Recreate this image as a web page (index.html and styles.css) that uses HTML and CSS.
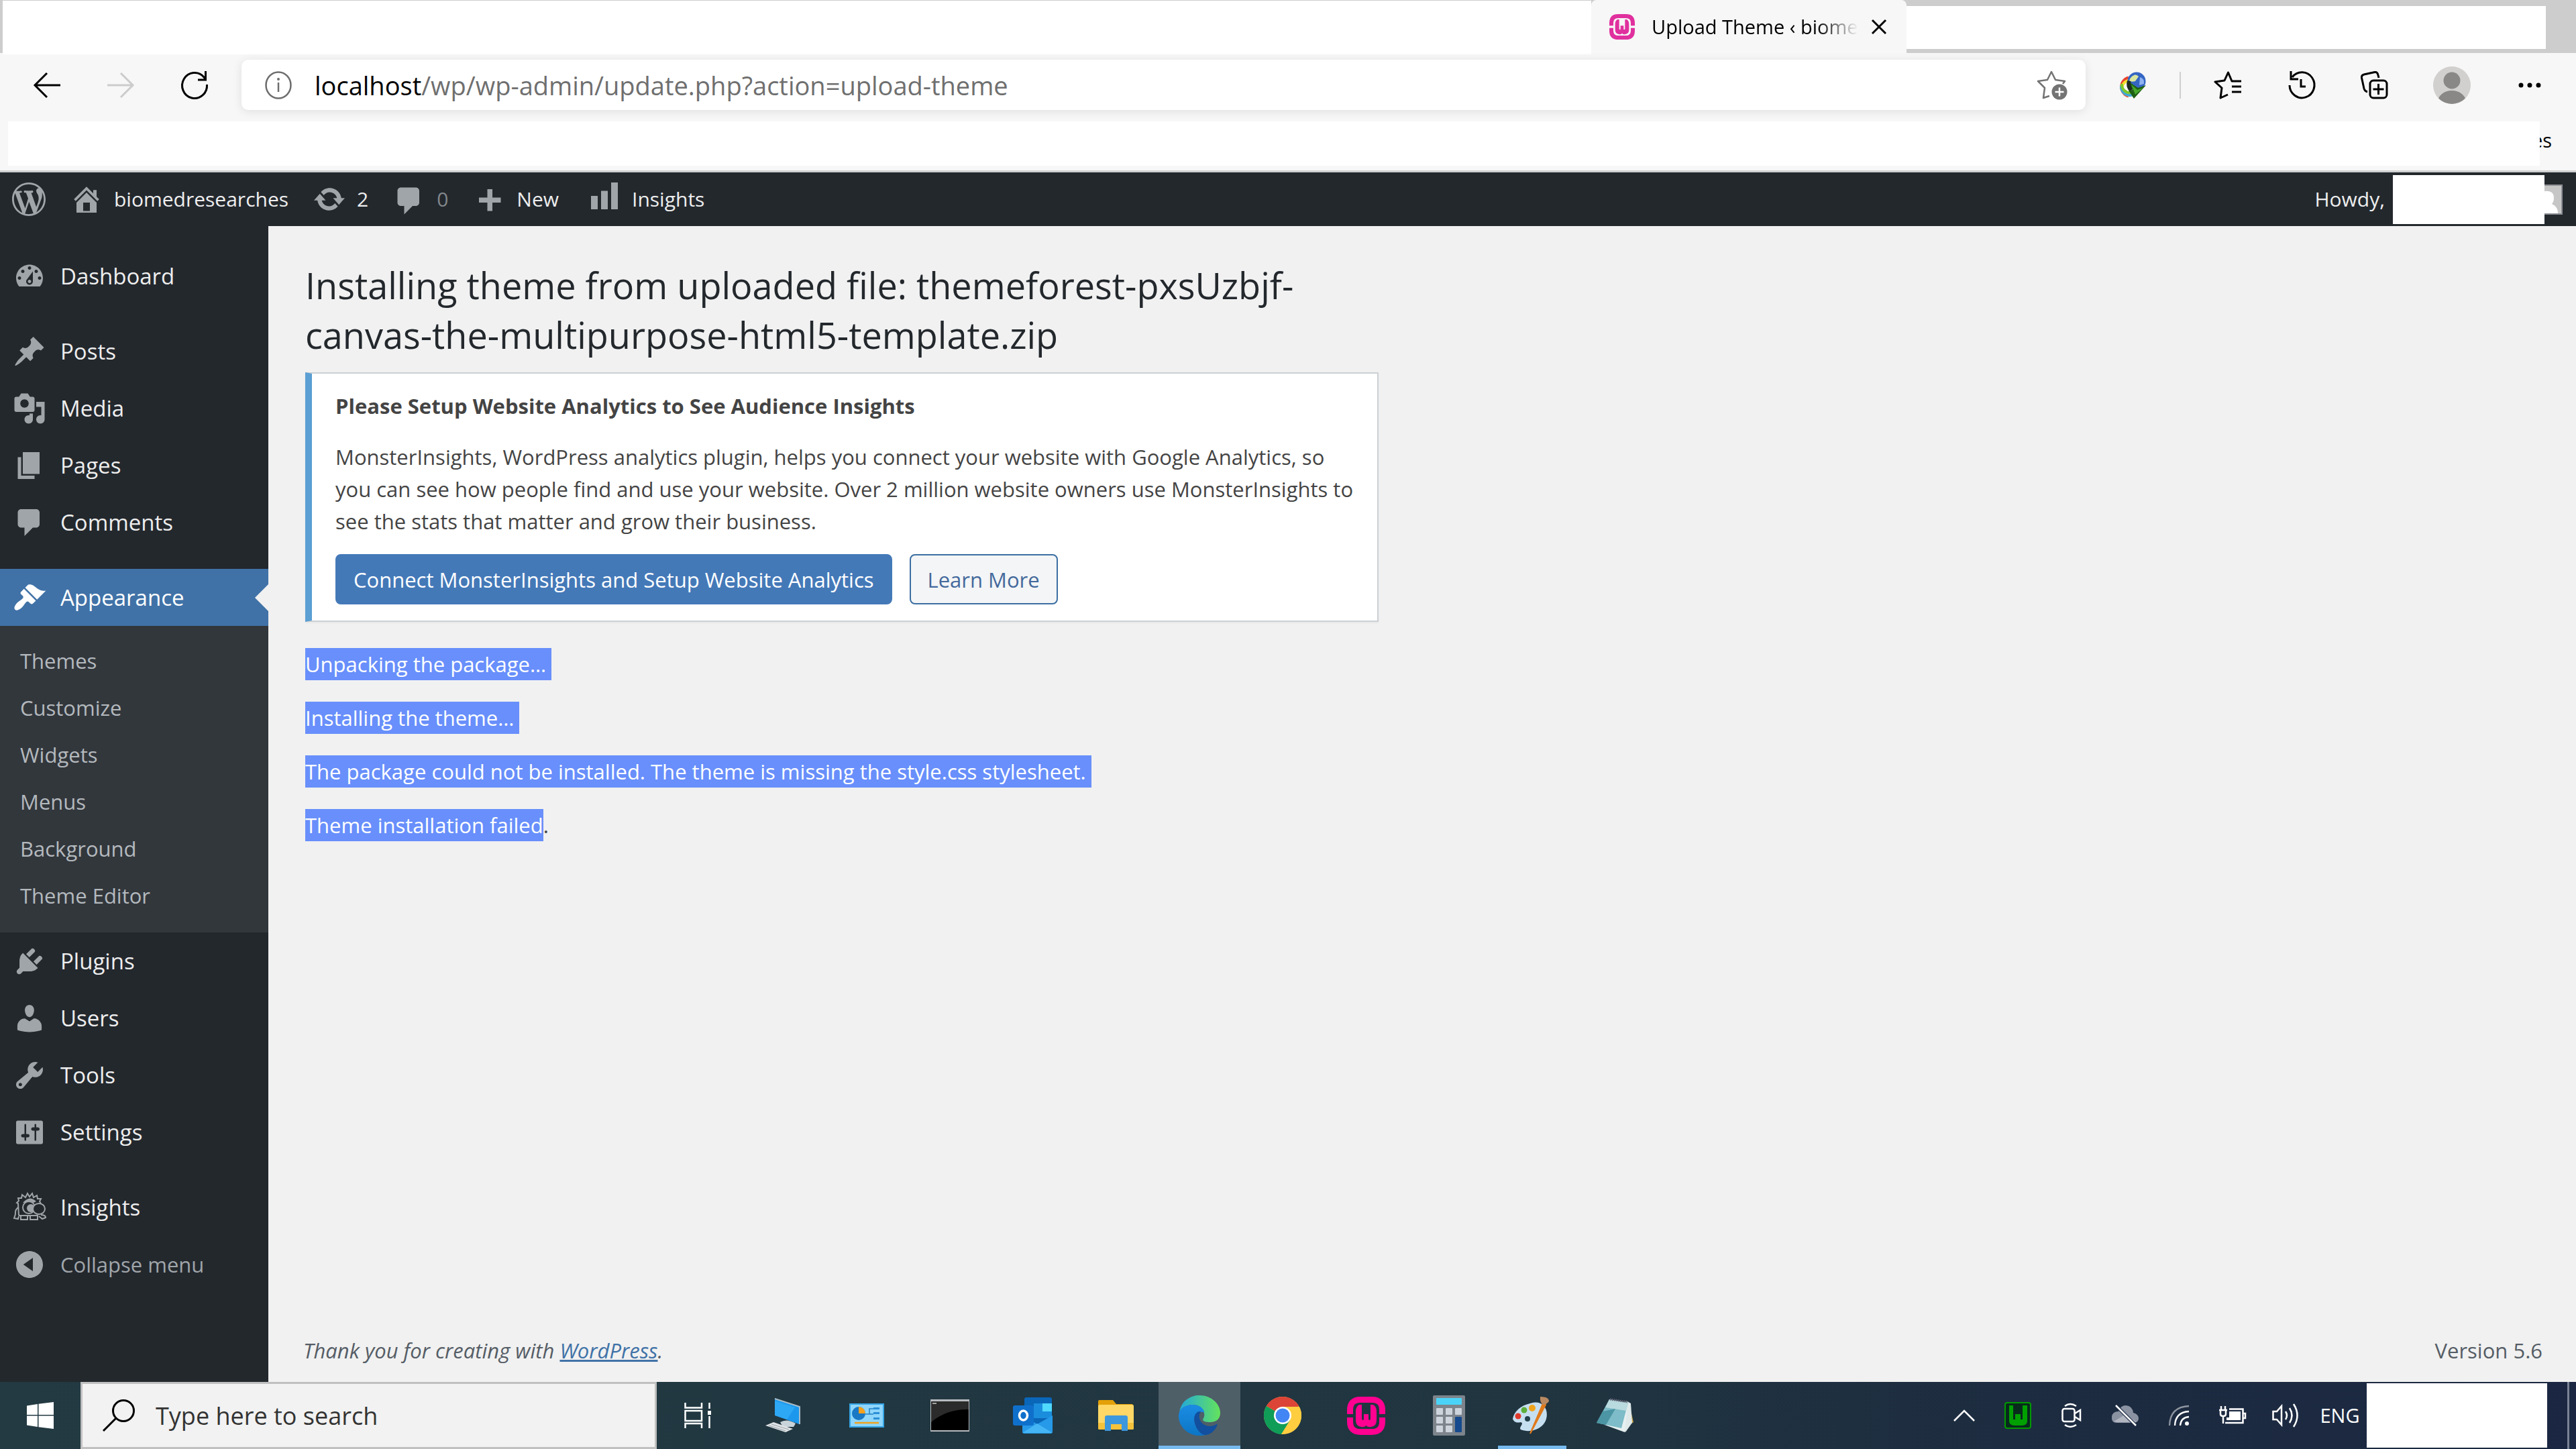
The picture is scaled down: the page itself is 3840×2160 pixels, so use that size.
FILE: index.html
```html
<!DOCTYPE html>
<html lang="en">
<head>
<meta charset="utf-8">
<title>Upload Theme ‹ biomedresearches</title>
<link rel="stylesheet" href="styles.css">
</head>
<body>
<svg width="0" height="0" class="defs" aria-hidden="true">
  <symbol id="wamp" viewBox="0 0 57 57">
    <path d="M4.500 26V20Q4.500 4.500 20 4.500H37Q52.500 4.500 52.500 20V26M4.500 31V37Q4.500 52.500 20 52.500H37Q52.500 52.500 52.500 37V31" fill="none" stroke="currentColor" stroke-width="9"/>
    <path d="M18 12H22V33Q22 35 24 35Q25 35 25 33V26H32V33Q32 35 33 35Q35 35 35 33V12H39Q44 15 44 22V35Q44 44 36 45Q31 46 28.500 43Q26 46 21 45Q13 44 13 35V22Q13 15 18 12Z" fill="currentColor"/>
  </symbol>
</svg>

<header class="browser">
  <div class="tabstrip">
    <div class="strip-blank strip-blank-left"></div>
    <div class="tab">
      <svg class="favicon" width="38" height="38"><use href="#wamp"/></svg>
      <span class="tab-title">Upload Theme ‹ biomed</span>
      <button class="icon-btn" aria-label="Close tab"><svg width="22" height="22" viewBox="0 0 22 22"><path d="M1 1L21 21M21 1L1 21" stroke="#000" stroke-width="3"/></svg></button>
    </div>
    <div class="strip-blank strip-blank-right"></div>
  </div>

  <div class="toolbar">
    <div class="nav-buttons">
      <button class="icon-btn" aria-label="Back"><svg width="40" height="40" viewBox="0 0 40 40"><path d="M20 2L2 20L20 38M2 20H40" fill="none" stroke="#000" stroke-width="3"/></svg></button>
      <button class="icon-btn" aria-label="Forward"><svg width="40" height="40" viewBox="0 0 40 40"><path d="M20 2L38 20L20 38M38 20H0" fill="none" stroke="#ccc" stroke-width="3"/></svg></button>
      <button class="icon-btn" aria-label="Refresh"><svg width="40" height="42" viewBox="0 0 40 42"><path d="M38.500 20A18.500 19 0 1 1 34 9L36 12M36.500 0V13H25" fill="none" stroke="#000" stroke-width="3"/></svg></button>
    </div>
    <div class="address">
      <svg width="40" height="42" viewBox="0 0 40 42"><ellipse cx="20" cy="21" rx="18.500" ry="19.500" fill="none" stroke="#6d6d6d" stroke-width="2.500"/><path d="M20 17V31" stroke="#6d6d6d" stroke-width="2.500"/><circle cx="20" cy="12" r="2" fill="#6d6d6d"/></svg>
      <div class="url" role="textbox" aria-label="Address"><span class="url-host">localhost</span>/wp/wp-admin/update.php?action=upload-theme</div>
      <button class="icon-btn" aria-label="Add to favorites"><svg width="46" height="44" viewBox="0 0 46 44"><path d="M18 38L9 41L11 26L1 16L15 14L21 2L27 14L41 16L38 20" fill="none" stroke="#737373" stroke-width="2.500" stroke-linejoin="round"/><circle cx="33" cy="32" r="11.500" fill="#737373"/><path d="M33 25.500V38.500M26.500 32H39.500" stroke="#fff" stroke-width="2.500"/></svg></button>
    </div>
    <div class="tools">
      <button class="icon-btn" aria-label="Download manager"><svg width="40" height="40" viewBox="0 0 40 40">
        <path d="M14 9A14 14 0 0 0 14 36" fill="none" stroke="#e8432e" stroke-width="5"/><path d="M15 13A11 11 0 0 0 16 35" fill="none" stroke="#f3e22e" stroke-width="4"/><path d="M3 21A13 13 0 0 0 21 34" fill="none" stroke="#43a6d8" stroke-width="4"/><path d="M4 18A12 12 0 0 0 18 31" fill="none" stroke="#7cc82c" stroke-width="4"/>
        <circle cx="26" cy="14" r="13.500" fill="#3566c4"/><path d="M17 9Q24 1 29 7L24 14Q18 16 15 13Z" fill="#d9e6a0"/><path d="M31 8Q38 10 37 18L30 20Z" fill="#8fb3f0"/>
        <path d="M12 13L17 14L20 26L16 30Q9 22 12 13Z" fill="#1e2b20"/><path d="M16 16L28 24L40 20L22 40L14 28L20 27Z" fill="#1f5f14"/><path d="M18 19L27 27L36 24L24 34Z" fill="#46a82a"/></svg></button>
      <span class="tool-divider"></span>
      <button class="icon-btn" aria-label="Favorites"><svg width="40" height="42" viewBox="0 0 40 42"><path d="M20 35L9 40L11 25L1 16L15 14L20.500 2L26 15H40M26 23H40M26 31H40" fill="none" stroke="#000" stroke-width="3" stroke-linejoin="round"/></svg></button>
      <span class="tool-pair">
      <button class="icon-btn" aria-label="History"><svg width="40" height="42" viewBox="0 0 40 42"><path d="M2 21A18.500 19 0 1 0 6 9M4 0V12H15M19 12V23H26" fill="none" stroke="#000" stroke-width="3"/></svg></button>
      <button class="icon-btn" aria-label="Collections"><svg width="40" height="42" viewBox="0 0 40 42"><rect x="14" y="14" width="25" height="26" rx="5" fill="none" stroke="#000" stroke-width="3"/><path d="M26.500 19V35M18.500 27H34.500M10 31Q6 30 5 26L1.500 10Q1 6 5 5L21 1.500Q25 1 26 6L27 10" fill="none" stroke="#000" stroke-width="3"/></svg></button>
      <button class="icon-btn" aria-label="Profile"><svg width="56" height="56" viewBox="0 0 56 56"><defs><clipPath id="pc"><circle cx="28" cy="28" r="28"/></clipPath></defs><g clip-path="url(#pc)"><rect width="56" height="56" fill="#d2d0ce"/><circle cx="28" cy="21" r="12.500" fill="#8a8886"/><ellipse cx="28" cy="53" rx="21" ry="17" fill="#8a8886"/></g></svg></button>
      <button class="icon-btn" aria-label="Settings and more"><svg width="40" height="10" viewBox="0 0 40 10"><circle cx="7" cy="5" r="3.500"/><circle cx="20" cy="5" r="3.500"/><circle cx="33" cy="5" r="3.500"/></svg></button>
      </span>
    </div>
  </div>

  <div class="favbar">
    <div class="favbar-blank"></div>
    <span class="favbar-more">es</span>
  </div>
</header>

<nav class="adminbar" aria-label="Toolbar">
  <a href="#" aria-label="About WordPress"><svg class="ico" viewBox="0 0 20 20"><path d="M20 10c0-5.510-4.490-10-10-10C4.480 0 0 4.490 0 10c0 5.520 4.480 10 10 10 5.510 0 10-4.480 10-10zM7.780 15.370L4.370 6.220c.55-.02 1.170-.08 1.170-.08.5-.06.44-1.130-.06-1.110 0 0-1.450.11-2.370.11-.18 0-.37 0-.58-.01C4.120 2.690 6.870 1.110 10 1.110c2.330 0 4.450.87 6.050 2.340-.68-.11-1.650.39-1.650 1.580 0 .74.45 1.360.9 2.100.35.61.55 1.360.55 2.460 0 1.490-1.400 5-1.400 5l-3.030-8.370c.54-.02.82-.17.82-.17.5-.05.44-1.250-.06-1.220 0 0-1.440.12-2.380.12-.87 0-2.330-.12-2.330-.12-.5-.03-.56 1.200-.06 1.220l.92.08 1.260 3.410zM17.410 10c.24-.64.74-1.870.43-4.250.7 1.290 1.050 2.710 1.050 4.250 0 3.290-1.730 6.240-4.400 7.780.97-2.590 1.940-5.200 2.920-7.780zM6.100 18.090C3.120 16.650 1.110 13.530 1.110 10c0-1.300.23-2.480.72-3.590C3.250 10.300 4.670 14.200 6.100 18.090zm4.030-6.630l2.580 6.980c-.86.29-1.760.45-2.710.45-.79 0-1.570-.11-2.290-.33.81-2.380 1.620-4.740 2.420-7.100z"/></svg></a>
  <a href="#"><svg class="ico" viewBox="0 0 20 20"><path d="M16 8.500l1.530 1.530-1.060 1.060L10 4.600l-6.470 6.490-1.060-1.060L10 2.500l4 4v-2h2v4zm-6-2.460l6 5.990V18H4v-5.970zM12 17v-5H8v5h4z"/></svg>biomedresearches</a>
  <a href="#"><svg class="ico" viewBox="0 0 20 20"><path d="M10.200 3.280c3.530 0 6.430 2.610 6.920 6h2.080l-3.500 4-3.500-4h2.320c-.45-1.970-2.210-3.450-4.320-3.450-1.450 0-2.730.71-3.540 1.780L4.950 5.660C6.230 4.200 8.110 3.280 10.200 3.280zm-.4 13.440c-3.520 0-6.430-2.610-6.920-6H.8l3.500-4c1.170 1.330 2.330 2.670 3.500 4H5.480c.45 1.970 2.210 3.450 4.320 3.450 1.450 0 2.730-.71 3.540-1.780l1.710 1.950c-1.280 1.460-3.150 2.380-5.250 2.380z"/></svg>2</a>
  <a href="#" class="muted"><svg class="ico" viewBox="0 0 20 20"><path d="M5 3h9c1.100 0 2 .9 2 2v7c0 1.100-.9 2-2 2h-2l-5 5v-5H5c-1.100 0-2-.9-2-2V5c0-1.100.9-2 2-2z"/></svg>0</a>
  <a href="#"><svg class="ico" viewBox="0 0 20 20"><path d="M17 9v3h-5v5H9v-5H4V9h5V4h3v5h5z"/></svg>New</a>
  <a href="#" class="stats"><svg class="ico" viewBox="0 0 20 20"><path d="M18 16V0h-4v16h4zm-6 0V5H8v11h4zm-6 0V8H2v8h4z"/></svg>Insights</a>
  <a href="#" class="howdy">Howdy,<span class="name-blank"></span><svg width="27" height="45" viewBox="0 0 27 45"><rect width="27" height="45" fill="#8c8f94"/><rect width="25" height="41" y="2" fill="#c6c6c6"/><path d="M0 10Q14 8 14 20Q14 26 11 29Q20 33 20 43H0Z" fill="#fff"/></svg></a>
</nav>

<div class="admin">
  <nav class="sidebar" aria-label="Main menu">
    <ul class="menu">
      <li><a href="#"><svg class="ico" viewBox="0 0 20 20"><path d="M3.760 16h12.480c1.100-1.370 1.760-3.110 1.760-5 0-4.420-3.580-8-8-8s-8 3.580-8 8c0 1.890.66 3.630 1.760 5zM10 4c.55 0 1 .45 1 1s-.45 1-1 1-1-.45-1-1 .45-1 1-1zM6 6c.55 0 1 .45 1 1s-.45 1-1 1-1-.45-1-1 .45-1 1-1zm8 0c.55 0 1 .45 1 1s-.45 1-1 1-1-.45-1-1 .45-1 1-1zm-5.370 5.550L12 7v6c0 1.100-.9 2-2 2s-2-.9-2-2c0-.57.24-1.080.63-1.450zM4 10c.55 0 1 .45 1 1s-.45 1-1 1-1-.45-1-1 .45-1 1-1zm12 0c.55 0 1 .45 1 1s-.45 1-1 1-1-.45-1-1 .45-1 1-1zm-5 3c0-.55-.45-1-1-1s-1 .45-1 1 .45 1 1 1 1-.45 1-1z"/></svg>Dashboard</a></li>
    </ul>
    <ul class="menu">
      <li><a href="#"><svg class="ico" viewBox="0 0 20 20"><path d="M10.440 3.020l1.820-1.820 6.360 6.350-1.830 1.820c-1.050-.68-2.480-.57-3.410.36l-.75.75c-.92.93-1.040 2.350-.35 3.410l-1.830 1.820-2.410-2.410-2.800 2.790c-.42.42-3.380 2.710-3.800 2.290s1.860-3.390 2.280-3.810l2.790-2.790L4.100 9.360l1.830-1.820c1.050.69 2.480.57 3.400-.36l.75-.75c.93-.92 1.050-2.350.36-3.410z"/></svg>Posts</a></li>
      <li><a href="#"><svg class="ico" viewBox="0 0 20 20"><path d="M13 11V4c0-.55-.45-1-1-1h-1.670L9 1H5L3.670 3H2c-.55 0-1 .45-1 1v7c0 .55.45 1 1 1h10c.55 0 1-.45 1-1zM7 4.500c1.380 0 2.500 1.120 2.500 2.500S8.380 9.500 7 9.500 4.500 8.380 4.500 7 5.620 4.500 7 4.500zM14 6h5v10.500c0 1.380-1.120 2.500-2.500 2.500S14 17.880 14 16.500s1.120-2.500 2.500-2.500c.17 0 .34.02.5.05V9h-3V6zm-4 8.050V13h2v3.500c0 1.380-1.120 2.500-2.500 2.500S7 17.880 7 16.500 8.120 14 9.500 14c.17 0 .34.02.5.05z"/></svg>Media</a></li>
      <li><a href="#"><svg class="ico" viewBox="0 0 20 20"><path d="M6 15V2h10v13H6zm-1 1h8v2H3V5h2v11z"/></svg>Pages</a></li>
      <li><a href="#"><svg class="ico" viewBox="0 0 20 20"><path d="M5 2h9c1.100 0 2 .9 2 2v7c0 1.100-.9 2-2 2h-2l-5 5v-5H5c-1.100 0-2-.9-2-2V4c0-1.100.9-2 2-2z"/></svg>Comments</a></li>
    </ul>
    <ul class="menu">
      <li class="current">
        <a href="#"><svg class="ico" viewBox="0 0 20 20"><path d="M14.480 11.060L7.410 3.990l1.500-1.500c.5-.56 2.300-.47 3.510.32 1.210.8 1.430 1.280 2.910 2.100 1.180.64 2.450 1.260 4.450.85zm-.71.71L6.700 4.700 4.930 6.470c-.39.39-.39 1.020 0 1.410l1.060 1.060c.39.39.39 1.030 0 1.420-.6.6-1.430 1.110-2.210 1.690-.35.26-.7.53-1.010.84C1.430 14.230.4 16.080 1.400 17.070c.99 1 2.840-.03 4.180-1.360.31-.31.58-.66.85-1.020.57-.78 1.080-1.610 1.690-2.210.39-.39 1.020-.39 1.410 0l1.060 1.060c.39.39 1.020.39 1.410 0z"/></svg>Appearance</a>
        <ul class="submenu">
          <li><a href="#">Themes</a></li>
          <li><a href="#">Customize</a></li>
          <li><a href="#">Widgets</a></li>
          <li><a href="#">Menus</a></li>
          <li><a href="#">Background</a></li>
          <li><a href="#">Theme Editor</a></li>
        </ul>
      </li>
      <li><a href="#"><svg class="ico" viewBox="0 0 20 20"><path d="M13.110 4.360L9.870 7.600 8 5.730l3.240-3.240c.35-.34 1.050-.2 1.560.32.52.51.66 1.210.31 1.550zm-8 1.770l.91-1.120 9.010 9.010-1.190.84c-.71.71-2.630 1.160-3.820 1.160H6.140L4.900 17.260c-.59.59-1.540.59-2.120 0-.59-.58-.59-1.530 0-2.120l1.240-1.240v-3.880c0-1.130.4-3.190 1.090-3.890zm7.260 3.970l3.240-3.240c.34-.35 1.040-.21 1.550.31.52.51.66 1.210.31 1.550l-3.240 3.250z"/></svg>Plugins</a></li>
      <li><a href="#"><svg class="ico" viewBox="0 0 20 20"><path d="M10 9.250c-2.270 0-2.730-3.440-2.730-3.440C7 4.020 7.820 2 9.970 2c2.160 0 2.980 2.020 2.710 3.810 0 0-.41 3.440-2.680 3.440zm0 2.570L12.720 10c2.390 0 4.520 2.330 4.520 4.530v2.490s-3.650 1.130-7.240 1.130c-3.650 0-7.240-1.130-7.240-1.130v-2.490c0-2.250 1.940-4.480 4.470-4.480z"/></svg>Users</a></li>
      <li><a href="#"><svg class="ico" viewBox="0 0 20 20"><path d="M16.680 9.770c-1.340 1.340-3.300 1.670-4.950.99l-5.410 6.520c-.99.99-2.590.99-3.580 0s-.99-2.590 0-3.570l6.520-5.420c-.68-1.650-.35-3.610.99-4.950 1.280-1.280 3.120-1.620 4.720-1.060l-2.890 2.890 2.820 2.820 2.860-2.870c.53 1.580.18 3.390-1.080 4.650zM3.810 16.210c.4.39 1.040.39 1.430 0 .4-.4.4-1.040 0-1.430-.39-.4-1.030-.4-1.430 0-.39.39-.39 1.030 0 1.430z"/></svg>Tools</a></li>
      <li><a href="#"><svg class="ico" viewBox="0 0 20 20"><path d="M18 16V4c0-.55-.45-1-1-1H3c-.55 0-1 .45-1 1v12c0 .55.45 1 1 1h14c.55 0 1-.45 1-1zM8 11h1c.55 0 1 .45 1 1s-.45 1-1 1H8v1.500c0 .28-.22.5-.5.5s-.5-.22-.5-.5V13H6c-.55 0-1-.45-1-1s.45-1 1-1h1V5.500c0-.28.22-.5.5-.5s.5.22.5.5V11zm5-2h-1c-.55 0-1-.45-1-1s.45-1 1-1h1V5.500c0-.28.22-.5.5-.5s.5.22.5.5V7h1c.55 0 1 .45 1 1s-.45 1-1 1h-1v5.500c0 .28-.22.5-.5.5s-.5-.22-.5-.5V9z"/></svg>Settings</a></li>
    </ul>
    <ul class="menu">
      <li><a href="#"><svg class="ico line" viewBox="0 0 50 50"><path d="M9 37L8 19L6 18L9 15L8 11L13 11L14 6L19 10L22 4L25 9L29 4L31 10L36 7L37 12L42 12L40 16L42 19M9 37H38M12 38V43H22V38M26 38V43H37V38M9 24Q3 28 4 35L2 41L8 42L9 38M42 36Q49 36 49 40L44 42L39 38"/><path d="M15 18Q25 6 35 16L31 18Q25 13 19 18Z" class="solid"/><circle cx="24" cy="25" r="9"/><circle cx="27" cy="26" r="6" class="solid"/><ellipse cx="39" cy="27" rx="9" ry="8" class="lens"/></svg>Insights</a></li>
      <li><button class="collapse"><svg class="ico" viewBox="0 0 20 20"><path d="M10 2c4.420 0 8 3.580 8 8s-3.580 8-8 8-8-3.580-8-8 3.580-8 8-8zm2 12V6l-5.700 4z"/></svg>Collapse menu</button></li>
    </ul>
  </nav>

  <main class="content">
    <div class="wrap">
      <h1>Installing theme from uploaded file: themeforest-pxsUzbjf-canvas-the-multipurpose-html5-template.zip</h1>
      <section class="notice">
        <h2>Please Setup Website Analytics to See Audience Insights</h2>
        <p>MonsterInsights, WordPress analytics plugin, helps you connect your website with Google Analytics, so you can see how people find and use your website. Over 2 million website owners use MonsterInsights to see the stats that matter and grow their business.</p>
        <div class="actions">
          <button class="btn btn-primary">Connect MonsterInsights and Setup Website Analytics</button>
          <button class="btn btn-secondary">Learn More</button>
        </div>
      </section>
      <div class="log">
        <p><mark class="to-end">Unpacking the package…</mark></p>
        <p><mark class="to-end">Installing the theme…</mark></p>
        <p><mark class="to-end">The package could not be installed. The theme is missing the style.css stylesheet.</mark></p>
        <p><mark>Theme installation failed</mark>.</p>
      </div>
    </div>
    <footer class="footer">
      <span class="thanks">Thank you for creating with <a href="#">WordPress</a>.</span>
      <span>Version 5.6</span>
    </footer>
  </main>
</div>

<div class="taskbar">
  <button class="start" aria-label="Start"><svg width="40" height="40" viewBox="0 0 40 40"><path d="M0 5.500L16 3V19H0ZM17.500 2.700L40 0V19H17.500ZM0 20.500H16V37L0 34.500ZM17.500 20.500H40V40L17.500 37.200Z" fill="#fff"/></svg></button>
  <label class="search">
    <svg width="50" height="50" viewBox="0 0 50 50"><circle cx="32" cy="18" r="15.500" fill="none" stroke="#000" stroke-width="3"/><path d="M21 29L2 48" stroke="#000" stroke-width="3"/></svg>
    <input type="text" placeholder="Type here to search" aria-label="Search">
  </label>
  <button class="app app-view" aria-label="Task View"><svg width="40" height="38" viewBox="0 0 40 38"><path d="M1.500 0V7.500H26V0M1.500 38V31H26V38M1.500 12H26V27H1.500ZM37.500 0V9M37.500 20V38" fill="none" stroke="#fff" stroke-width="2.500"/><rect x="35" y="12" width="5" height="6" fill="#fff"/></svg></button>
  <div class="apps">
    <button class="app" aria-label="This PC"><svg width="54" height="52" viewBox="0 0 54 52"><path d="M14 1L51 13V39L14 26Z" fill="#2da8f5"/><path d="M14 1L51 13V39L32 32L44 14L14 4Z" fill="#1b98ee"/><path d="M14 1L51 13V39" fill="none" stroke="#a8bcc8" stroke-width="2"/><path d="M22 36Q32 30 45 38L42 43H26Z" fill="#c9d3da"/><path d="M0 41L12 36L41 46L30 51Z" fill="#dfe3e6"/><path d="M5 41L30 49M9 39L35 47" stroke="#98a1a8" stroke-width="1"/></svg></button>
    <button class="app" aria-label="Control Panel"><svg width="52" height="36" viewBox="0 0 52 36"><rect width="52" height="36" fill="#35a5e6"/><rect x="2" y="2" width="48" height="32" fill="#8fd6fa"/><circle cx="14" cy="15" r="10" fill="#1a78c4"/><path d="M14 15V5A10 10 0 0 1 24 15Z" fill="#f5a11c"/><path d="M24 16H30V8H36M30 16H36" fill="none" stroke="#2481c4" stroke-width="1.500"/><path d="M36 6H45V9H36ZM36 13H45V16H36ZM36 21H45V24H36Z" fill="#2b8fd6"/><path d="M8 29H44" stroke="#f0a21e" stroke-width="2.500"/></svg></button>
    <button class="app" aria-label="Command Prompt"><svg width="58" height="48" viewBox="0 0 58 48"><rect width="58" height="48" fill="#b7bbc0"/><rect x="1" y="3" width="56" height="43" fill="#000"/><path d="M1 3H57V15Q25 14 1 34Z" fill="#2b2b2b"/><path d="M3 6H9" stroke="#ccc" stroke-width="1.500"/></svg></button>
    <button class="app" aria-label="Outlook"><svg width="60" height="54" viewBox="0 0 60 54"><rect x="17" width="41" height="40" rx="3" fill="#0a66b8"/><path d="M31 9H58V31H31Z" fill="#1b8ddd"/><path d="M44 9H58V21H44Z" fill="#50d9ff"/><path d="M14 26L36 40L59 27V51Q59 54 56 54H17Q14 54 14 51Z" fill="#2699e8"/><path d="M14 53L36 39L59 53Z" fill="#45b5f5"/><rect y="12" width="31" height="30" rx="3" fill="#0f70cc"/><ellipse cx="15.500" cy="27" rx="6" ry="7" fill="none" stroke="#fff" stroke-width="3.500"/></svg></button>
    <button class="app" aria-label="File Explorer"><svg width="54" height="46" viewBox="0 0 54 46"><path d="M0 2Q0 0 2 0H22L27 6H50Q52 6 52 8V12H0Z" fill="#e3a008"/><rect y="7" width="53" height="37" rx="2" fill="#ffd766"/><path d="M0 34H53V42Q53 44 51 44H2Q0 44 0 42Z" fill="#f5c23c"/><path d="M10 46V26Q10 23 13 23H41Q44 23 44 26V46H35V36H19V46Z" fill="#3d97dc"/></svg></button>
    <button class="app active" aria-label="Microsoft Edge"><svg width="62" height="60" viewBox="0 0 62 60"><defs><linearGradient id="e1" x2="1"><stop stop-color="#22a9dc"/><stop offset="1" stop-color="#64e35b"/></linearGradient><linearGradient id="e2" y1="1" x2="0"><stop stop-color="#0c75c4"/><stop offset="1" stop-color="#1b8de4"/></linearGradient></defs><path d="M1 25C4 8 17 0 31 0C49 0 62 13 62 26C62 35 56 40 47 40C39 40 34 38 37 34C41 27 36 14 21 14C10 14 3 20 1 25Z" fill="url(#e1)"/><path d="M0 31C0 20 10 14 21 14C31 14 38 20 38 26C29 21 22 31 24 41C26 51 34 58 42 58C38 60 35 60 31 60C13 60 0 46 0 31Z" fill="url(#e2)"/><path d="M24 41C21 31 26 23 33 24C27 33 33 45 46 46C51 46 54 44 57 43C58 43 58 44 57 46C53 54 47 58 41 59C33 60 26 50 24 41Z" fill="#124f9e"/></svg></button>
    <button class="app" aria-label="Google Chrome"><svg width="56" height="56" viewBox="0 0 56 56"><circle cx="28" cy="28" r="28" fill="#ffcd40"/><path d="M28 28L3.700 14A28 28 0 0 1 52.300 14Z" fill="#db4437"/><path d="M28 28L3.700 14A28 28 0 0 0 26 56L40 35Z" fill="#0f9d58"/><path d="M28 15H52.800A28 28 0 0 1 26 56L39 35Z" fill="#ffcd40"/><circle cx="28" cy="28" r="13" fill="#fff"/><circle cx="28" cy="28" r="10.500" fill="#4285f4"/></svg></button>
    <button class="app pink" aria-label="WampServer"><svg width="57" height="57"><use href="#wamp"/></svg></button>
    <button class="app" aria-label="Calculator"><svg width="48" height="60" viewBox="0 0 48 60"><rect width="48" height="60" rx="2" fill="#7d848b"/><rect x="5" y="4" width="38" height="10" rx="1" fill="#4bd3f7"/><g fill="#cdd4dc"><rect x="5" y="19" width="10" height="10" rx="1"/><rect x="19" y="19" width="10" height="10" rx="1"/><rect x="33" y="19" width="10" height="10" rx="1"/><rect x="5" y="32" width="10" height="10" rx="1"/><rect x="19" y="32" width="10" height="10" rx="1"/><rect x="5" y="45" width="10" height="10" rx="1"/><rect x="19" y="45" width="10" height="10" rx="1"/></g><rect x="33" y="32" width="10" height="23" rx="1" fill="#154a8e"/></svg></button>
    <button class="app running" aria-label="Paint"><svg width="58" height="56" viewBox="0 0 58 56"><path d="M26 10C44 4 54 18 50 33C46 48 26 55 12 49C8 46 18 40 12 38C4 40 1 36 0 33C2 22 12 13 26 10Z" fill="#c6dff0"/><circle cx="22" cy="33" r="4" fill="#24404c"/><circle cx="8" cy="29" r="4.500" fill="#e0392b"/><circle cx="17" cy="20" r="4.500" fill="#5dae3a"/><circle cx="29" cy="17" r="5" fill="#f0a41c"/><path d="M46 8L26 55L32 44L49 12Z" fill="#e07b1c" stroke="#e07b1c" stroke-width="2"/><path d="M41 0Q54 0 54 7Q50 12 45 12Q40 8 41 0Z" fill="#b98a62"/></svg></button>
    <button class="app" aria-label="Notepad"><svg width="56" height="52" viewBox="0 0 56 52"><path d="M48 6L55 36L52 38L46 30Z" fill="#c8a64a"/><path d="M44 4L51 8L53 37L43 51L36 40Z" fill="#dfe9ea"/><path d="M12 40L34 30L46 12L42 51Z" fill="#e6eff0"/><path d="M19 2L47 7L37 45L0 37Z" fill="#7dbcc8"/><path d="M19 2L47 7L44 19L13 14Z" fill="#b9dade"/><path d="M9 20L28 16L14 40L0 37Z" fill="#4b95a4"/><path d="M20 2L47 6" stroke="#667" stroke-width="3" stroke-dasharray="2 1"/></svg></button>
  </div>
  <div class="tray">
    <button class="tray-btn" aria-label="Show hidden icons"><svg width="34" height="20" viewBox="0 0 34 20"><path d="M2 18L17 3L32 18" fill="none" stroke="#fff" stroke-width="2.500"/></svg></button>
    <button class="tray-btn" aria-label="WampServer status"><svg width="40" height="40" viewBox="0 0 40 40"><rect x="1" y="1" width="38" height="38" rx="3" fill="#082a1c" stroke="#009a00" stroke-width="2"/><path d="M7 5H13V26H16V18H24V26H27V5H34V28Q34 35 26 35H15Q7 35 7 28Z" fill="#00a000"/></svg></button>
    <button class="tray-btn" aria-label="Meet now"><svg width="30" height="38" viewBox="0 0 30 38"><path d="M5 5Q13 -1 22 5M5 33Q13 39 22 33M20 16L28 11V26L20 21" fill="none" stroke="#fff" stroke-width="2.500"/><rect x="1.500" y="9" width="18" height="19" rx="3" fill="none" stroke="#fff" stroke-width="2.500"/></svg></button>
    <button class="tray-btn" aria-label="OneDrive"><svg width="42" height="32" viewBox="0 0 42 32"><path d="M9 27Q0 27 1 18Q2 10 11 10Q14 1 22 1Q32 2 33 12Q41 14 41 21Q40 27 33 27Z" fill="#8b93a3"/><path d="M4 25L22 14L38 26H8Z" fill="#b0b5c0"/><path d="M7 1L37 31" stroke="#1b2a42" stroke-width="5"/><path d="M7 1L37 31" stroke="#fff" stroke-width="2.500"/></svg></button>
    <button class="tray-btn" aria-label="Network"><svg width="32" height="32" viewBox="0 0 32 32"><circle cx="28" cy="28" r="3" fill="#fff"/><g fill="none" stroke="#fff" stroke-width="2.300"><path d="M18 31Q19 19 31 18"/><path d="M10 31Q11 11 31 10"/><path d="M2 31Q3 3 31 2" opacity=".5"/></g></svg></button>
    <button class="tray-btn" aria-label="Battery"><svg width="40" height="30" viewBox="0 0 40 30"><path d="M15 5.500H35.500V26H9M35 12H39V19H35" fill="none" stroke="#fff" stroke-width="2.500"/><path d="M15 9H32V22H11V18H15Z" fill="#fff"/><path d="M3 1V6M9 1V6M0 7H12M2 7V13Q2 16 6 16Q10 16 10 13V7M6 16V27" fill="none" stroke="#fff" stroke-width="2.500"/></svg></button>
    <button class="tray-btn" aria-label="Volume"><svg width="42" height="38" viewBox="0 0 42 38"><path d="M1.500 13H7L14 5V33L7 25H1.500ZM20 13Q24 19 20 25M26 8Q33 19 26 30M32 2Q43 19 32 36" fill="none" stroke="#fff" stroke-width="2.500"/></svg></button>
    <button class="lang">ENG</button>
    <div class="clock-blank"></div>
    <div class="peek"></div>
  </div>
</div>
</body>
</html>
```
FILE: styles.css
```css
* { box-sizing: border-box; }

body {
  margin: 0;
  min-height: 100vh;
  display: flex;
  flex-direction: column;
  background: #f1f1f1;
  color: #444;
  font: 31px/48px "Open Sans", "Noto Sans", sans-serif;
}

a { color: inherit; text-decoration: none; }
ul { list-style: none; margin: 0; padding: 0; }
h1, h2, p { margin: 0; }
svg { display: block; flex: none; overflow: visible; }
button, input { font: inherit; color: inherit; border: 0; padding: 0; background: none; }
.defs { position: absolute; }
.icon-btn { display: flex; }

/* Browser window */
.browser { background: #f7f7f7; border-bottom: 3px solid #d0d0d0; }

.tabstrip {
  display: flex;
  height: 79px;
  padding: 0 45px 0 4px;
  background: #cdcdcd;
}
.strip-blank { background: #fff; }
.strip-blank-left { flex: 2368 0 0; margin: 1px 0 -2px; }
.strip-blank-right { flex: 953 0 0; margin: 9px 0 6px; }
.tab {
  flex: none;
  display: flex;
  align-items: center;
  width: 470px;
  padding: 0 30px 0 27px;
  border-radius: 8px 8px 0 0;
  background: #f7f7f7;
  color: #000;
  font-size: 29px;
}
.favicon { color: #e0309e; margin-right: 25px; }
.tab-title {
  flex: 1;
  overflow: hidden;
  white-space: nowrap;
  margin-right: 20px;
  mask-image: linear-gradient(90deg, #000 80%, transparent);
}

.toolbar {
  display: flex;
  align-items: center;
  height: 95px;
  padding: 0 49px 0 50px;
}
.nav-buttons { display: flex; align-items: center; gap: 70px; margin-right: 50px; }
.address {
  flex: 1;
  display: flex;
  align-items: center;
  height: 75px;
  padding: 0 26px 0 35px;
  border-radius: 10px;
  background: #fff;
  box-shadow: 0 2px 14px rgba(0, 0, 0, .1);
}
.url { flex: 1; padding-left: 34px; font-size: 38px; color: #6f6f6f; white-space: nowrap; }
.url-host { color: #000; }
.tools { display: flex; align-items: center; gap: 50px; margin-left: 50px; }
.tool-pair { display: flex; align-items: center; gap: 68px; margin-left: 20px; }
.tool-divider { width: 2px; height: 40px; background: #cfcfcf; }

.favbar { display: flex; padding: 7px 36px 7px 12px; }
.favbar-blank { flex: 1; height: 66px; background: #fff; }
.favbar-more {
  display: flex;
  justify-content: flex-end;
  width: 18px;
  padding-top: 4px;
  overflow: hidden;
  color: #000;
  font-size: 29px;
}

/* WordPress toolbar */
.ico { width: 50px; height: 50px; fill: #a0a5aa; }
.adminbar {
  display: flex;
  align-items: center;
  gap: 36px;
  height: 80px;
  padding: 0 20px 0 18px;
  background: #23282d;
  color: #eee;
  font-size: 30px;
}
.adminbar a { display: flex; align-items: center; gap: 16px; }
.adminbar .muted { color: #82878c; }
.adminbar .stats { margin-left: 7px; }
.adminbar .howdy { margin-left: auto; gap: 0; }
.name-blank { width: 226px; height: 73px; margin-left: 12px; background: #fff; }

/* WordPress admin */
.admin { flex: 1; display: flex; }
.sidebar {
  flex: none;
  width: 400px;
  padding-top: 32px;
  background: #23282d;
  color: #eee;
  font-size: 33px;
}
.menu + .menu { margin-top: 27px; }
.menu > li > a, .collapse {
  display: flex;
  align-items: center;
  gap: 21px;
  width: 100%;
  height: 85px;
  padding-left: 19px;
}
.current > a {
  position: relative;
  background: #4072a7;
  color: #fff;
}
.current > a::after {
  content: "";
  position: absolute;
  right: 0;
  top: 23px;
  border: 20px solid transparent;
  border-left-width: 0;
  border-right-color: #f1f1f1;
}
.current .ico { fill: #fff; }
.submenu { padding: 17px 30px 20px; background: #32373c; color: #b4b9be; font-size: 31px; }
.submenu a { display: block; line-height: 70px; }
.collapse { color: #a0a5aa; font-size: 31px; }
.line { fill: none; stroke: #a0a5aa; stroke-width: 2; }
.line .solid { fill: #a0a5aa; stroke: none; }
.line .lens { fill: #23282d; }

.content {
  flex: 1;
  display: flex;
  flex-direction: column;
  padding: 51px 50px 23px 55px;
}
.wrap { max-width: 1600px; }
h1 { color: #23282d; font-size: 54px; font-weight: 400; line-height: 74px; }

.notice {
  margin-top: 19px;
  padding: 24px 33px 24px 35px;
  border: 2px solid #ccd0d4;
  border-left: 10px solid #5b9fd3;
  background: #fff;
  box-shadow: 0 2px 3px rgba(0, 0, 0, .04);
}
.notice h2 { margin-bottom: 28px; font-size: 31px; line-height: 48px; font-weight: 700; }
.actions { display: flex; gap: 26px; margin-top: 25px; }
.btn { height: 75px; padding: 0 25px; border: 2px solid #4479b8; border-radius: 8px; }
.btn-primary { background: #4479b8; color: #fff; }
.btn-secondary { border-color: #3b6fa2; background: #f3f5f6; color: #44699c; }

.log { display: flex; flex-direction: column; gap: 32px; margin-top: 39px; }
mark { display: inline-block; background: #688ffb; color: #fff; }
.to-end { padding-right: 8px; }

.footer { display: flex; justify-content: space-between; margin: auto 0 0 -3px; color: #555d66; }
.thanks { font-style: italic; }
.thanks a { color: #4072a7; text-decoration: underline; }

/* Desktop taskbar */
.taskbar {
  display: flex;
  height: 100px;
  background: linear-gradient(90deg, #233a42, #203540 60%, #1d2c40 78%, #1b2742);
  color: #fff;
}
.start { width: 120px; display: flex; align-items: center; justify-content: center; }
.search {
  display: flex;
  align-items: center;
  gap: 30px;
  width: 859px;
  padding-left: 29px;
  border: 3px solid #c0c0c0;
  background: #f2f2f2;
  color: #222;
}
.search input { flex: 1; padding-top: 2px; font-size: 36px; }
.search input::placeholder { color: #333; opacity: 1; }
.apps { display: flex; gap: 2px; margin-left: 6px; }
.app { display: flex; align-items: center; justify-content: center; width: 122px; }
.active { background: #4e5f68; box-shadow: inset 0 -5px #76b9ed; }
.running { background: linear-gradient(#76b9ed, #76b9ed) center bottom / 102px 5px no-repeat; }
.pink { color: #ff0090; }
.tray { display: flex; align-items: center; margin-left: auto; font-size: 29px; }
.tray-btn { display: flex; align-items: center; justify-content: center; width: 80px; height: 100px; }
.lang { width: 80px; }
.clock-blank { width: 269px; height: 96px; background: #fff; }
.peek { width: 3px; height: 100px; margin: 0 10px 0 30px; background: #7a8296; }
```
